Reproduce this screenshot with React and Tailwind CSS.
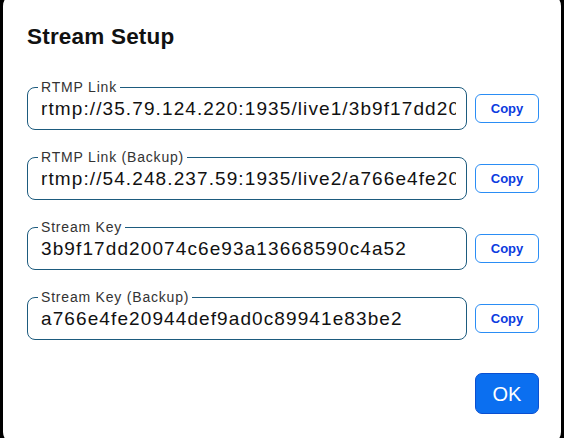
import React from 'react';

const fields = [
  { label: 'RTMP Link', value: 'rtmp://35.79.124.220:1935/live1/3b9f17dd20074c6e93a13668590c4a52' },
  { label: 'RTMP Link (Backup)', value: 'rtmp://54.248.237.59:1935/live2/a766e4fe20944def9ad0c89941e83be2' },
  { label: 'Stream Key', value: '3b9f17dd20074c6e93a13668590c4a52' },
  { label: 'Stream Key (Backup)', value: 'a766e4fe20944def9ad0c89941e83be2' },
];

function FieldRow({ label, value }) {
  return (
    <div className="flex items-end gap-[8px]">
      <fieldset className="w-[440px] min-w-0 shrink-0 rounded-[8px] border border-[#1d5b7e] pl-[10px] pr-[10px] pb-[8px]">
        <legend className="px-[3px] text-[14px] leading-[16px] tracking-[0.8px] text-[#333]">{label}</legend>
        <input
          readOnly
          value={value}
          className="mt-[2px] block h-[24px] w-full min-w-0 bg-transparent pl-[3px] text-[19px] leading-[24px] tracking-[1.1px] text-[#111] outline-none"
        />
      </fieldset>
      <button className="mb-[7px] h-[29px] w-[64px] shrink-0 rounded-[6px] border border-[#2a8df5] bg-white text-[13px] font-semibold text-[#0b3be0]">
        Copy
      </button>
    </div>
  );
}

export default function App() {
  return (
    <div className="h-[438px] w-[564px] overflow-hidden bg-black px-[3px]" style={{ fontFamily: '"Liberation Sans", Arial, sans-serif' }}>
      <div className="-mt-[6px] h-[450px] rounded-[12px] bg-white pl-[24px] pr-[22px] pt-[30px]">
        <h1 className="text-[22.5px] font-bold leading-[26px] tracking-[0.2px] text-[#111]">Stream Setup</h1>
        <div className="mt-[29px] flex flex-col gap-[19px]">
          {fields.map((f) => (
            <FieldRow key={f.label} {...f} />
          ))}
        </div>
        <div className="mt-[33px] flex justify-end">
          <button className="h-[41px] w-[64px] rounded-[7px] border border-[#0a4fd0] bg-[#0b6ff0] text-[20px] text-white">
            OK
          </button>
        </div>
      </div>
    </div>
  );
}
